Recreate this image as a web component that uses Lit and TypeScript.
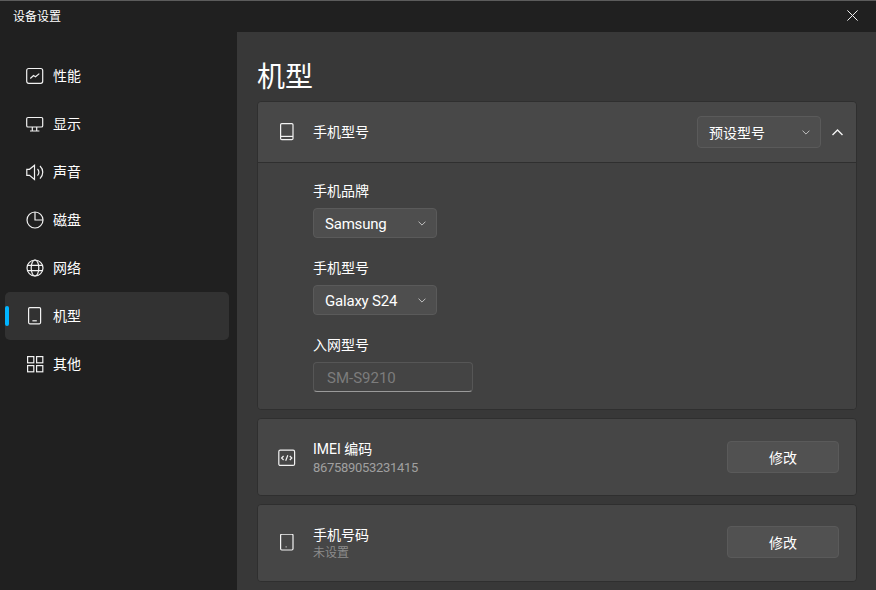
import { LitElement, html, css, svg } from "lit";
import { customElement } from "lit/decorators.js";

const ic = (body: unknown) => html`<svg class="ic" viewBox="0 0 18 18" fill="none" stroke="currentColor" stroke-width="1.2">${body}</svg>`;

const perf = svg`<rect x=".7" y="1.5" width="16" height="14.8" rx="2"/><path d="M4.3 11.5 7.5 8.5 9.5 9.8 13.3 6.6"/>`;
const monitor = svg`<rect x=".7" y="2.5" width="16" height="9.5" rx="1.3"/><path d="M6.3 12V16M10.7 12V16M4 16H13.4"/>`;
const sound = svg`<path d="M.8 6.3H3.5L8.5 2.2V16.4L3.5 12.3H.8Z"/><path d="M11.5 6A4.6 4.6 0 0 1 11.5 12.6M14 3A8.6 8.6 0 0 1 14 15.6"/>`;
const disk = svg`<circle cx="9" cy="9" r="8"/><path d="M9 1V9H17"/>`;
const globe = svg`<circle cx="9" cy="9" r="8"/><ellipse cx="9" cy="9" rx="3.8" ry="8"/><path d="M1.5 6.3H16.5M1.5 11.7H16.5"/>`;
const tablet = svg`<rect x="2.6" y=".6" width="12" height="16.2" rx="1.2"/><path d="M6.4 13.8H10.8"/>`;
const grid = svg`<rect x="1.6" y="1.6" width="6.2" height="6.2"/><rect x="10.6" y="1.6" width="6.2" height="6.2"/><rect x="1.6" y="10.6" width="6.2" height="6.2"/><rect x="10.6" y="10.6" width="6.2" height="6.2"/>`;
const phoneTop = svg`<rect x="2.6" y=".6" width="12.4" height="16" rx="1.2"/><path d="M2.6 13.4H15"/>`;
const code = svg`<rect x=".8" y="2.2" width="15.8" height="15.2" rx="1.5"/><path d="M5.6 8 3.6 10 5.6 12M11.8 8 13.8 10 11.8 12M9.8 7.3 7.7 12.7"/>`;
const phoneDot = svg`<rect x="2.6" y=".2" width="12.4" height="15.8" rx="1.2"/><path d="M7.7 12.9H8.5"/>`;

const nav: [string, unknown][] = [
  ["性能", perf],
  ["显示", monitor],
  ["声音", sound],
  ["磁盘", disk],
  ["网络", globe],
  ["机型", tablet],
  ["其他", grid],
];

const chevron = html`<svg class="chev" viewBox="0 0 10 6" fill="none" stroke="currentColor" stroke-width="1.1"><path d="M.7.7 5 5 9.3.7"/></svg>`;

@customElement("app-root")
export class AppRoot extends LitElement {
  static styles = css`
    :host {
      display: block;
      width: 876px;
      height: 590px;
      overflow: hidden;
      background: #202020;
      color: #fff;
      font-family: Roboto, "Noto Sans CJK SC", sans-serif;
      font-size: 14px;
      box-sizing: border-box;
      border-top: 1px solid #5c5c5c;
    }
    * { box-sizing: border-box; }
    .titlebar {
      height: 31px;
      display: flex;
      align-items: center;
      justify-content: space-between;
      padding: 0 18px 2px 13px;
      font-size: 12px;
    }
    .close { width: 11px; height: 11px; display: block; }
    .body { display: flex; height: 558px; }
    .side {
      width: 237px;
      flex: none;
      padding: 20px 8px 0 5px;
      display: flex;
      flex-direction: column;
    }
    .item {
      height: 48px;
      flex: none;
      border-radius: 5px;
      display: flex;
      align-items: center;
      gap: 9px;
      padding-left: 21px;
      position: relative;
      color: #fff;
    }
    .item span { position: relative; top: -1px; }
    .item.on { background: #323232; }
    .item.on::before {
      content: "";
      position: absolute;
      left: 0;
      top: 14px;
      width: 4px;
      height: 20px;
      border-radius: 2px;
      background: #00b4ff;
    }
    .ic { width: 18px; height: 18px; flex: none; display: block; color: #f2f2f2; }
    .main {
      flex: 1;
      background: #383838;
      padding: 25px 19px 0 20px;
      min-width: 0;
    }
    h1 {
      margin: 0 0 2px;
      font-size: 28px;
      font-weight: 400;
      line-height: 42px;
      height: 42px;
    }
    .card {
      background: #444;
      border: 1px solid #2f2f2f;
      border-radius: 4px;
      margin-bottom: 8px;
    }
    .head {
      height: 61px;
      display: flex;
      align-items: center;
      padding: 0 13px 0 20px;
      border-bottom: 1px solid #2f2f2f;
      background: #484848;
      border-radius: 4px 4px 0 0;
    }
    .head .label, .row .label { margin-left: 17px; flex: 1; line-height: 18px; }
    .row .label.low { padding-top: 1px; }
    .row .label.low .sub { margin-top: 2px; }
    .select {
      display: flex;
      align-items: center;
      justify-content: space-between;
      height: 30px;
      width: 124px;
      background: #4e4e4e;
      border: 1px solid #5a5a5a;
      border-radius: 4px;
      padding: 0 10px 0 11px;
      font-size: 15px;
      letter-spacing: -0.2px;
    }
    .select span { padding-top: 2px; }
    .select.big { height: 32px; font-size: 14px; letter-spacing: 0; }
    .select.big span { padding-top: 0; }
    .chev { width: 8px; height: 5px; color: #d0d0d0; flex: none; }
    .up { width: 11px; height: 7px; margin-left: 11px; display: block; }
    .panel {
      height: 246px;
      padding: 18px 0 0 55px;
      display: flex;
      flex-direction: column;
      gap: 20px;
      background: #414141;
      border-radius: 0 0 4px 4px;
    }
    .field label { display: block; line-height: 20px; margin-bottom: 7px; height: 20px; }
    .input {
      width: 160px;
      height: 30px;
      border: 1px solid #565656;
      border-bottom-color: #9a9a9a;
      border-radius: 4px;
      background: #444;
      color: #7c7c7c;
      padding: 2px 13px 0;
      display: flex;
      align-items: center;
      font-size: 15px;
    }
    .row {
      height: 76px;
      display: flex;
      align-items: center;
      padding: 0 17px 0 20px;
      background: #464646;
      border-radius: 4px;
    }
    .sub { font-size: 13px; color: #a0a0a0; line-height: 16px; margin-top: 1px; letter-spacing: -0.3px; }
    .sub.dim { font-size: 12px; color: #8c8c8c; letter-spacing: 0; }
    .btn {
      width: 112px;
      height: 32px;
      background: #515151;
      border: 1px solid #5a5a5a;
      border-radius: 4px;
      display: flex;
      align-items: center;
      justify-content: center;
    }
    .btn.raised { margin-bottom: 2px; }
  `;

  render() {
    return html`
      <div class="titlebar">
        <span>设备设置</span>
        <svg class="close" viewBox="0 0 11 11" stroke="#f0f0f0" stroke-width="1"><path d="M.4.4 10.6 10.6M10.6.4.4 10.6"/></svg>
      </div>
      <div class="body">
        <nav class="side">
          ${nav.map(([t, i]) => html`<div class="item ${t === "机型" ? "on" : ""}">${ic(i)}<span>${t}</span></div>`)}
        </nav>
        <main class="main">
          <h1>机型</h1>
          <section class="card">
            <div class="head">
              ${ic(phoneTop)}
              <span class="label">手机型号</span>
              <div class="select big"><span>预设型号</span>${chevron}</div>
              <svg class="up" viewBox="0 0 11 7" fill="none" stroke="#f4f4f4" stroke-width="1.4"><path d="M.5 6 5.5 1 10.5 6"/></svg>
            </div>
            <div class="panel">
              <div class="field">
                <label>手机品牌</label>
                <div class="select"><span>Samsung</span>${chevron}</div>
              </div>
              <div class="field">
                <label>手机型号</label>
                <div class="select"><span>Galaxy S24</span>${chevron}</div>
              </div>
              <div class="field">
                <label>入网型号</label>
                <div class="input">SM-S9210</div>
              </div>
            </div>
          </section>
          <section class="card">
            <div class="row">
              ${ic(code)}
              <div class="label low"><div>IMEI 编码</div><div class="sub">867589053231415</div></div>
              <div class="btn">修改</div>
            </div>
          </section>
          <section class="card">
            <div class="row">
              ${ic(phoneDot)}
              <div class="label"><div>手机号码</div><div class="sub dim">未设置</div></div>
              <div class="btn raised">修改</div>
            </div>
          </section>
        </main>
      </div>
    `;
  }
}
